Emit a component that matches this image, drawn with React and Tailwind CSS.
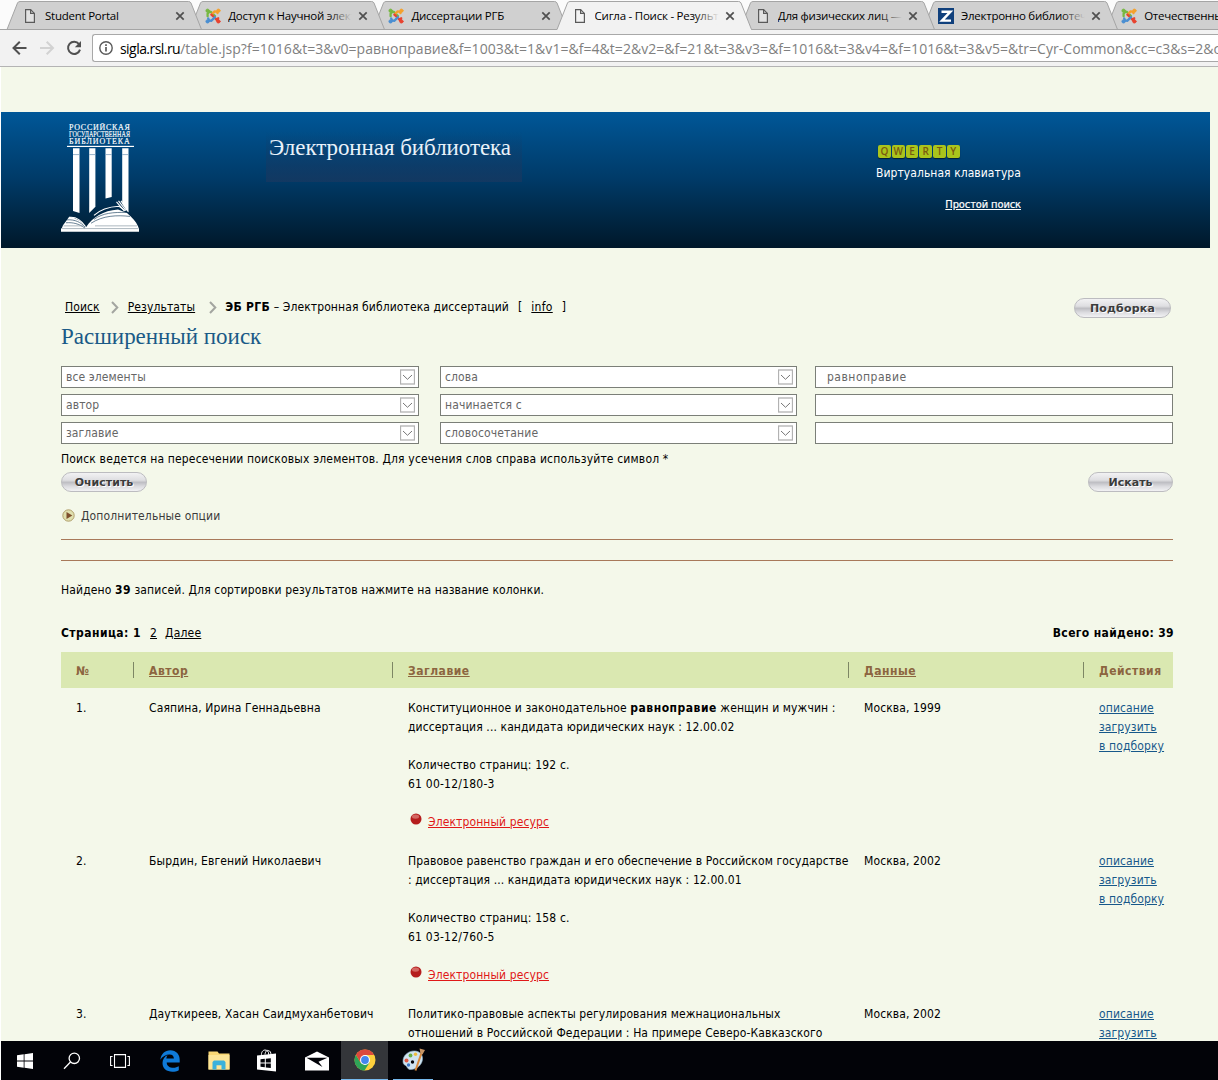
import React from "react";

const tabs = [
  { icon: "page", title: "Student Portal" },
  { icon: "joomla", title: "Доступ к Научной электронной" },
  { icon: "joomla", title: "Диссертации РГБ" },
  { icon: "page", title: "Сигла - Поиск - Результаты", active: true },
  { icon: "page", title: "Для физических лиц — РГБ" },
  { icon: "z", title: "Электронно библиотечная" },
  { icon: "joomla", title: "Отечественные" },
];

const filters = [
  { field: "все элементы", mode: "слова", value: "равноправие" },
  { field: "автор", mode: "начинается с", value: "" },
  { field: "заглавие", mode: "словосочетание", value: "" },
];

const records = [
  {
    id: "1.",
    author: "Саяпина, Ирина Геннадьевна",
    lines: [
      <>
        Конституционное и законодательное{" "}
        <b className="tracking-[0.5px]">равноправие</b> женщин и мужчин :
      </>,
      "диссертация ... кандидата юридических наук : 12.00.02",
    ],
    pages: "Количество страниц: 192 с.",
    code: "61 00-12/180-3",
    place: "Москва, 1999",
  },
  {
    id: "2.",
    author: "Бырдин, Евгений Николаевич",
    lines: [
      "Правовое равенство граждан и его обеспечение в Российском государстве",
      ": диссертация ... кандидата юридических наук : 12.00.01",
    ],
    pages: "Количество страниц: 158 с.",
    code: "61 03-12/760-5",
    place: "Москва, 2002",
  },
  {
    id: "3.",
    author: "Дауткиреев, Хасан Саидмуханбетович",
    lines: [
      "Политико-правовые аспекты регулирования межнациональных",
      "отношений в Российской Федерации : На примере Северо-Кавказского",
    ],
    place: "Москва, 2002",
  },
];

function TabIcon({ type }) {
  if (type === "page") {
    return (
      <svg width="16" height="16" viewBox="0 0 16 16" fill="none" stroke="#5a5a5a" strokeWidth="1.2">
        <path d="M3.6 1.6h5l3.8 3.8v9H3.6z" fill="#f4f4f4" fillOpacity="0.5" />
        <path d="M8.6 1.6v3.8h3.8" />
      </svg>
    );
  }
  if (type === "z") {
    return (
      <svg width="16" height="16" viewBox="0 0 16 16">
        <rect width="16" height="16" fill="#10407c" />
        <path d="M3.5 3.7h9L4 12.6h9" fill="none" stroke="#fff" strokeWidth="2.4" />
      </svg>
    );
  }
  return (
    <svg width="16" height="16" viewBox="0 0 16 16" fill="none" strokeWidth="2.3" strokeLinecap="round" strokeLinejoin="round">
      <path d="M2.6 8.2V5.8L4.6 3.6 6.2 4.2 10 8" stroke="#77b843" />
      <path d="M7.4 5.6L9.6 3.4 11.6 3.6 12.6 5" stroke="#f5a12c" />
      <path d="M6.4 6.6L10 10l2.2 2.4 1-2.2" stroke="#e8432f" />
      <path d="M3.2 10.4l1 2 2 .4L10 9.2" stroke="#4b8fd2" />
      <circle cx="2.6" cy="2.7" r="1.7" fill="#77b843" stroke="#77b843" strokeWidth="0.8" />
      <circle cx="13.4" cy="2.7" r="1.7" fill="#f5a12c" stroke="#f5a12c" strokeWidth="0.8" />
      <circle cx="13.4" cy="13.4" r="1.7" fill="#e8432f" stroke="#e8432f" strokeWidth="0.8" />
      <circle cx="2.6" cy="13.4" r="1.7" fill="#4b8fd2" stroke="#4b8fd2" strokeWidth="0.8" />
    </svg>
  );
}

function Tab({ tab, order }) {
  return (
    <div className="relative h-[30px] w-[183.2px] shrink-0" style={{ zIndex: order }}>
      <svg className="absolute left-0 top-0 overflow-visible" width="195" height="30" viewBox="0 0 195 30">
        <path
          d="M0 29.500L10.500 3Q11.200 1.500 13 1.500H181.500Q183.300 1.500 184 3L194.500 29.500"
          fill={tab.active ? "#f2f2f2" : "#d0d0d0"}
          stroke="#a5a5a5"
        />
        {tab.active ? (
          <path d="M0.500 29.800H194" stroke="#f2f2f2" strokeWidth="1.800" />
        ) : (
          <path d="M0 29.500H195" stroke="#a5a5a5" />
        )}
      </svg>
      <div className="relative flex h-[30px] items-center pl-[15px] pt-[2px]">
        <TabIcon type={tab.icon} />
        <div className="relative ml-[7px] w-[124px] overflow-hidden whitespace-nowrap font-['Open_Sans',sans-serif] text-[11.5px] tracking-[-0.24px] text-black">
          {tab.title}
          <span
            className={`absolute inset-y-0 right-0 w-6 bg-gradient-to-r ${
              tab.active ? "from-[#f2f2f2]/0 to-[#f2f2f2]" : "from-[#d0d0d0]/0 to-[#d0d0d0]"
            }`}
          />
        </div>
        <svg className="ml-[6px]" width="10" height="10" viewBox="0 0 10 10" stroke="#4f4f4f" strokeWidth="1.7">
          <path d="M1.3 1.3l7.4 7.4M8.7 1.3L1.3 8.7" />
        </svg>
      </div>
    </div>
  );
}

function Browser() {
  return (
    <>
      <div className="isolate flex h-[30px] border-b border-[#a5a5a5] bg-[#fbfbfb] pl-[7px]">
        {tabs.map((tab, i) => (
          <Tab key={tab.title} tab={tab} order={tab.active ? 10 : 8 - i} />
        ))}
      </div>
      <div className="flex h-[37px] items-center border-b border-[#b4b4b4] bg-[#f2f2f2]">
        <div className="flex w-[92px] items-center gap-[11px] pl-[12px]">
          <svg width="16" height="16" viewBox="0 0 16 16" fill="none" stroke="#505050" strokeWidth="2">
            <path d="M14.500 8H1.500M7.800 1.700L1.500 8l6.300 6.300" />
          </svg>
          <svg width="16" height="16" viewBox="0 0 16 16" fill="none" stroke="#d2d2d2" strokeWidth="2">
            <path d="M1 8h12.5M7.7 1.7L14 8l-6.3 6.3" />
          </svg>
          <svg width="16" height="16" viewBox="0 0 16 16" fill="none" stroke="#505050" strokeWidth="2">
            <path d="M13 4.1A6.1 6.1 0 1 0 14 9.6" />
            <path d="M15 1v6.2H8.8z" fill="#505050" stroke="none" />
          </svg>
        </div>
        <div className="flex h-[28px] flex-1 items-center overflow-hidden rounded-l-[3px] border border-r-0 border-[#a8a8a8] bg-white pl-[6px] font-['Open_Sans',sans-serif] text-[14px] whitespace-nowrap">
          <svg className="shrink-0" width="14" height="14" viewBox="0 0 14 14" fill="none" stroke="#5a5a5a" strokeWidth="1.4">
            <circle cx="7" cy="7" r="6.2" />
            <path d="M7 6v4.5M7 3.2v1.7" strokeWidth="1.7" />
          </svg>
          <span className="ml-[7px] tracking-[-0.55px] text-black">sigla.rsl.ru</span>
          <span className="tracking-[0.04px] text-[#808080]">
            /table.jsp?f=1016&amp;t=3&amp;v0=равноправие&amp;f=1003&amp;t=1&amp;v1=&amp;f=4&amp;t=2&amp;v2=&amp;f=21&amp;t=3&amp;v3=&amp;f=1016&amp;t=3&amp;v4=&amp;f=1016&amp;t=3&amp;v5=&amp;tr=Cyr-Common&amp;cc=c3&amp;s=2&amp;c
          </span>
        </div>
      </div>
    </>
  );
}

function Logo() {
  return (
    <svg width="78" height="111" viewBox="0 0 78 114" preserveAspectRatio="none" fill="#fff">
      <g fontFamily="'Liberation Serif', serif" fontSize="8" stroke="#fff" strokeWidth="0.15">
        <text x="8" y="9" textLength="61" lengthAdjust="spacing">РОССИЙСКАЯ</text>
        <text x="8" y="16.5" textLength="61" lengthAdjust="spacingAndGlyphs">ГОСУДАРСТВЕННАЯ</text>
        <text x="8" y="23.8" textLength="61" lengthAdjust="spacing">БИБЛИОТЕКА</text>
      </g>
      <rect x="6" y="25.500" width="67" height="1.2" />
      <path d="M12 28h6.5v66.5l-6.5-2z" />
      <path d="M28.2 28h6.200v60l-6.200 6.5z" />
      <path d="M44.500 28h6.2V78L44.500 79.500z" />
      <path d="M61.2 28h6.3V94l-6.3-9z" />
      <path d="M12 34.500h6.5M28.2 34.500h6.2M44.500 34.500h6.2M61.2 34.500h6.3" stroke="#7da0bd" strokeWidth="0.8" />
      <path d="M2 107L5 103 8 98.5C14 99 20 102 25 109C32 99 42 92 57 91L66 94.500C71 99 75 103 77 108L78 111H0.5z" />
      <path d="M0 110.5h78v3.3H0z" />
      <g fill="none" stroke="#fff" strokeWidth="1.1">
        <path d="M8 99C15 98 21 103 24.5 108.5M33 97C40 90 48 88 58 87.5L64 92" />
        <path d="M55.5 83l8 9.5M57.5 82l7.5 10M60 82l7 11" />
      </g>
      <g fill="none" stroke="#284a66" strokeWidth="0.7">
        <path d="M6 101.5C14 101 20 104 24 109M5 104.5C12 104 18 105.500 24 110" />
        <path d="M33 101C42 94.500 52 93.500 66 94M30 105C42 97 56 96.500 69 98" />
        <path d="M1 110.5H77.500M2.500 107.700H22M34 107.700H76" stroke="#8797a2" />
      </g>
    </svg>
  );
}

function Header() {
  return (
    <header className="mt-[45px] mr-[8px] flex h-[136px] bg-linear-to-b from-[#005798] via-[#003a67] to-[#00182a] pl-[60px]">
      <div className="w-[205px] pt-[9px]">
        <Logo />
      </div>
      <div className="mt-[20px] h-[50px] w-[256px] bg-linear-to-b from-[#23376a]/0 to-[#1a3860]/70 pl-[3px]">
        <span className="block font-['Liberation_Serif',serif] text-[23px] leading-[32px] tracking-[-0.06px] whitespace-nowrap text-[#e9f2fa]">
          Электронная библиотека
        </span>
      </div>
      <div className="ml-auto mr-[189px] flex w-[145px] flex-col pt-[33px] text-white">
        <div className="flex gap-px pl-[2px]">
          {"QWERTY".split("").map((key) => (
            <span
              key={key}
              className="h-[13px] w-[12.8px] rounded-[2px] bg-[#a9c41c] text-center font-['Open_Sans',sans-serif] text-[10px] leading-[13px] font-semibold text-[#7a5a10] shadow-[0_1px_1px_#001c33]"
            >
              {key}
            </span>
          ))}
        </div>
        <span className="mt-[6px] leading-[18px] tracking-[0.06px] whitespace-nowrap">Виртуальная клавиатура</span>
        <a className="mt-[15px] self-end text-[11px] leading-[16px] tracking-[-0.1px] whitespace-nowrap underline [-webkit-text-stroke:0.2px_#fff]">
          Простой поиск
        </a>
      </div>
    </header>
  );
}

function PillButton({ className, children }) {
  return (
    <button
      className={`h-[20px] rounded-full border border-[#bcbcc0] bg-[linear-gradient(#f2f2f3_0%,#dedee1_40%,#bebec3_52%,#dcdce0_75%,#f2f2f4_100%)] font-['DejaVu_Sans',sans-serif] text-[11px] leading-[19px] font-bold whitespace-nowrap text-[#3c3c3c] [text-shadow:1px_1px_0_#fff] ${className}`}
    >
      {children}
    </button>
  );
}

function Select({ className = "w-[358px]", children }) {
  return (
    <div className={`flex h-[22px] items-center justify-between border border-[#7b7f78] bg-white pr-[3px] pl-1 text-[#666] ${className}`}>
      {children}
      <svg width="15" height="16" viewBox="0 0 15 16" fill="none">
        <rect x="0.5" y="1" width="14" height="14" stroke="#b2b2b2" strokeWidth="1.300" />
        <path d="M3 6l4.500 4.300L12 6" stroke="#777" />
      </svg>
    </div>
  );
}

function Chevron() {
  return (
    <svg width="8" height="13" viewBox="0 0 8 13" fill="none" stroke="#a3a5a0" strokeWidth="2">
      <path d="M1 1l5.300 5.500L1 12" />
    </svg>
  );
}

function SearchForm() {
  return (
    <section className="pt-[48px]">
      <div className="flex h-[24px] items-center justify-between pr-[2px] pl-1">
        <div className="flex items-center pb-[2px] leading-[18px] whitespace-nowrap">
          <a className="underline">Поиск</a>
          <span className="mr-[9px] ml-[11px] pt-px"><Chevron /></span>
          <a className="underline">Результаты</a>
          <span className="mr-[8px] ml-[14px] pt-px"><Chevron /></span>
          <span><b className="tracking-[0.35px]">ЭБ РГБ</b> – Электронная библиотека диссертаций</span>
          <span className="ml-[9px]">[</span>
          <a className="ml-[9px] tracking-[0.3px] underline">info</a>
          <span className="ml-[9px]">]</span>
        </div>
        <PillButton className="w-[97px] tracking-[0.2px]">Подборка</PillButton>
      </div>
      <h1 className="mt-[3px] font-['Liberation_Serif',serif] text-[23px] leading-[28px] tracking-[-0.02px] text-[#1a5a87]">
        Расширенный поиск
      </h1>
      <div className="mt-[15px] space-y-[6px]">
        {filters.map((row) => (
          <div key={row.field} className="flex">
            <Select>{row.field}</Select>
            <div className="ml-[21px]">
              <Select className="w-[357px]">{row.mode}</Select>
            </div>
            <div className="ml-[18px] flex h-[22px] w-[358px] items-center border border-[#7b7f78] bg-white pl-[11px] tracking-[0.5px] text-[#666]">
              {row.value}
            </div>
          </div>
        ))}
      </div>
      <p className="mt-[6px] leading-[18px] tracking-[0.165px] whitespace-nowrap">
        Поиск ведется на пересечении поисковых элементов. Для усечения слов справа используйте символ *
      </p>
      <div className="mt-[4px] flex justify-between">
        <PillButton className="w-[86px] tracking-[0px]">Очистить</PillButton>
        <PillButton className="w-[85px] tracking-[0px]">Искать</PillButton>
      </div>
      <div className="mt-[14px] flex h-[20px] items-center gap-[6px] pl-px tracking-[0.14px] text-[#3c3c3c]">
        <svg className="mb-px" width="13" height="13" viewBox="0 0 13 13">
          <circle cx="6.500" cy="6.500" r="5.700" fill="#dfe0ae" stroke="#b19f6c" />
          <path d="M4.500 3v7l5.800-3.500z" fill="#7e4f2c" />
        </svg>
        Дополнительные опции
      </div>
      <hr className="mt-[13px] border-[#a8795a]" />
      <hr className="mt-[20px] border-[#a8795a]" />
    </section>
  );
}

const cols = "grid grid-cols-[73px_259px_456px_235px_89px]";

function Results() {
  return (
    <section>
      <p className="mt-[19px] leading-[20px] tracking-[0.13px] whitespace-nowrap">
        Найдено <b className="tracking-[0.45px]">39</b> записей. Для сортировки результатов нажмите на название колонки.
      </p>
      <div className="mt-[23px] flex h-[20px] items-center justify-between">
        <div className="flex">
          <b className="tracking-[0.45px]">Страница: 1</b>
          <a className="ml-[9px] underline">2</a>
          <a className="ml-[8px] tracking-[0.2px] underline">Далее</a>
        </div>
        <b className="-mr-px tracking-[0.36px]">Всего найдено: 39</b>
      </div>
      <div className={`${cols} mt-[9px] h-[36px] items-center bg-[#dae8b1] font-bold tracking-[0.52px] text-[#8c6540]`}>
        <div className="h-4 border-r border-[#7d8664] pl-[15px] leading-[18px]">№</div>
        <div className="h-4 border-r border-[#7d8664] pl-[15px] leading-[18px] underline">Автор</div>
        <div className="h-4 border-r border-[#7d8664] pl-[15px] leading-[18px] underline">Заглавие</div>
        <div className="h-4 border-r border-[#7d8664] pl-[15px] leading-[18px] underline">Данные</div>
        <div className="h-4 pl-[15px] leading-[18px]">Действия</div>
      </div>
      {records.map((rec) => (
        <div key={rec.id} className={`${cols} pt-[11px] pb-[9px] leading-[19px] whitespace-nowrap *:pl-[15px]`}>
          <div>{rec.id}</div>
          <div>{rec.author}</div>
          <div>
            {rec.lines.map((line, i) => (
              <p key={i}>{line}</p>
            ))}
            {rec.pages && (
              <>
                <p className="mt-[19px] tracking-[0.16px]">{rec.pages}</p>
                <p className="tracking-[0.22px]">{rec.code}</p>
                <p className="mt-[19px] flex text-[#e01818]">
                  <svg className="mr-[6px] ml-[2px]" width="12" height="12" viewBox="0 0 12 12">
                    <circle cx="6" cy="6" r="5.500" fill="#b51d1d" />
                    <ellipse cx="5.500" cy="3.600" rx="3.600" ry="2.200" fill="#dc7a74" fillOpacity="0.8" />
                  </svg>
                  <a className="underline">Электронный ресурс</a>
                </p>
              </>
            )}
          </div>
          <div>{rec.place}</div>
          <div className="flex flex-col text-[#17588a] underline">
            <a>описание</a>
            <a>загрузить</a>
            <a>в подборку</a>
          </div>
        </div>
      ))}
    </section>
  );
}

function Taskbar() {
  return (
    <footer className="ml-px flex h-[39px] shrink-0 bg-[#020308]">
      <div className="flex w-[48px] items-center justify-center">
        <svg width="16" height="16" viewBox="0 0 16 16" fill="#fff">
          <path d="M0 2.200L6.700 1.300V7.600H0zM7.500 1.200L16 0V7.600H7.500zM0 8.400H6.700V14.700L0 13.800zM7.500 8.400H16V16L7.500 14.800z" />
        </svg>
      </div>
      <div className="flex w-[46px] items-center justify-center">
        <svg width="18" height="18" viewBox="0 0 18 18" fill="none" stroke="#fff" strokeWidth="1.300">
          <circle cx="11.300" cy="6.300" r="5.200" />
          <path d="M7.500 10L1 16.700" />
        </svg>
      </div>
      <div className="flex w-[49px] items-center justify-center">
        <svg width="20" height="14" viewBox="0 0 20 14" fill="none" stroke="#fff" strokeWidth="1.100">
          <path d="M4.500 0.600h11v12.800h-11zM2.600 2.500H0.600v9h2M17.400 2.500h2v9h-2" />
        </svg>
      </div>
      <div className="flex w-[52px] items-center justify-center">
        <svg width="20" height="22" viewBox="0 0 20 22" fill="#0f7ad8">
          <path d="M0.300 9.800C1 4 5 0.300 10.300 0.300c6 0 9.400 4.300 9.400 9.500v2.600H6.700c.1 3.800 3.400 5.300 6.500 5.300 2.300 0 4.100-.6 5.600-1.500v4.100c-1.700 1-4.200 1.500-6.500 1.500-5.600 0-9.800-3.200-9.800-8.700 0-4 2-6.700 5.300-8.200-1 1.100-1.300 2.200-1.500 3.700h7.600c0-2.700-1.600-4.200-4.300-4.200C5.700 4.400 2.400 6.400.3 9.800z" />
        </svg>
      </div>
      <div className="flex w-[45px] items-center justify-center">
        <svg width="22" height="19" viewBox="0 0 22 19">
          <path d="M0.500 0.500h9l1.500 2h10.500v16H0.500z" fill="#f9d774" />
          <path d="M0.500 4h21v14.500h-21z" fill="#fde597" />
          <path d="M4.500 18.500v-7.500l1.500-1.500h10l1.500 1.500v7.500h-4v-4.300h-5v4.300z" fill="#3ab1dc" />
        </svg>
      </div>
      <div className="flex w-[51px] items-center justify-center">
        <svg width="21" height="23" viewBox="0 0 21 23">
          <path d="M1 6.500L20 4.500V22.500L1 20.500z" fill="#fff" />
          <path d="M5.500 7C5 3 7 1 9 1s4 1.500 3.700 4.700M9 5.500C9.500 2 11 1 12.500 1.500S15 3 15 6" fill="none" stroke="#fff" />
          <path d="M4.500 10.200l4.300-.4v3.700H4.500zM9.800 9.700l5-.5v4.300h-5zM4.500 14.500h4.300v3.700l-4.300-.4zM9.800 14.500h5v4.400l-5-.5z" fill="#020308" />
        </svg>
      </div>
      <div className="flex w-[49px] items-center justify-center">
        <svg width="24" height="20" viewBox="0 0 24 20">
          <path d="M0 6.500L12 0.500l12 6V19.500H0z" fill="#fff" />
          <path d="M1.500 6.800L22.500 6.800 13.500 10.800 17.500 16z" fill="#020308" />
        </svg>
      </div>
      <div className="flex w-[47px] items-center justify-center border-b border-[#76b9ed] bg-[#34363a]">
        <svg width="22" height="22" viewBox="0 0 22 22">
          <circle cx="11" cy="11" r="10.500" fill="#fdcf3c" />
          <path d="M1.900 5.750A10.500 10.500 0 0 0 10.500 21.500L15.600 13.600 6.500 13.600z" fill="#2fa457" />
          <path d="M1.900 5.750A10.500 10.500 0 0 1 20.100 5.900H11L6.500 13.600z" fill="#dc4a3d" />
          <circle cx="11" cy="11" r="5" fill="#fff" />
          <circle cx="11" cy="11" r="3.900" fill="#4486ee" />
        </svg>
      </div>
      <div className="ml-[5px] flex w-[40px] items-center justify-center border-b border-[#76b9ed]">
        <svg width="25" height="24" viewBox="0 0 25 24">
          <path d="M2 13C2 7 8 2.500 14 3c5 .3 8 4 7.500 8.500S17 21 10.500 21.500C6 22 6.500 18.500 4.500 17.500S2 15.500 2 13z" fill="#cfe3f0" stroke="#8fb2ca" strokeWidth="0.600" />
          <circle cx="5.500" cy="12.500" r="2" fill="#e05a45" />
          <circle cx="9.500" cy="7.500" r="1.900" fill="#69ae45" />
          <circle cx="14.500" cy="6.200" r="1.700" fill="#f0bc3c" />
          <circle cx="7.500" cy="17" r="1.700" fill="#3d78c8" />
          <circle cx="11.500" cy="14" r="1.700" fill="#020308" />
          <path d="M21 3.500L14.500 22.500" stroke="#d9893c" strokeWidth="2" />
          <path d="M18.500 0.500L24 2 21.500 6.500 19.500 5.800z" fill="#c99564" />
        </svg>
      </div>
    </footer>
  );
}

export default function App() {
  return (
    <div className="flex h-[1080px] w-[1218px] flex-col overflow-hidden bg-white font-['DejaVu_Sans_Condensed','DejaVu_Sans',sans-serif] text-[12px] tracking-[0.11px] text-black">
      <Browser />
      <main className="ml-px min-h-0 flex-1 overflow-hidden bg-[#f4f8ea]">
        <Header />
        <div className="ml-[60px] w-[1112px]">
          <SearchForm />
          <Results />
        </div>
      </main>
      <Taskbar />
    </div>
  );
}
